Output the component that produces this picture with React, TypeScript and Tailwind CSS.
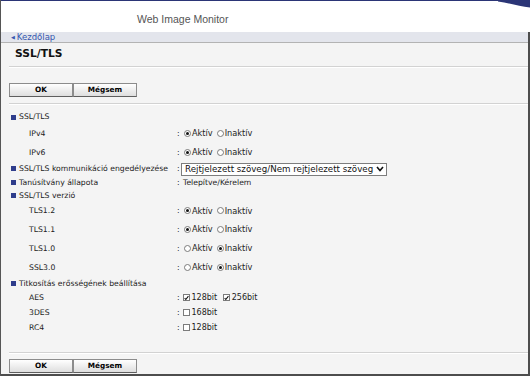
import React from "react";

const Radio = ({ on }: { on: boolean }) => (
	<span className="inline-flex items-center justify-center w-[7px] h-[7px] rounded-full border border-[#7b7b7b] bg-white shrink-0">
		{on && <span className="w-[3px] h-[3px] rounded-full bg-[#111]" />}
	</span>
);

const Check = ({ on }: { on: boolean }) => (
	<span className="inline-flex items-center justify-center w-[7px] h-[7px] border border-[#7b7b7b] bg-white shrink-0">
		{on && (
			<svg width="6" height="6" viewBox="0 0 6 6">
				<polyline points="0.8,3.2 2.2,4.8 5.3,0.8" fill="none" stroke="#111" strokeWidth="1.3" />
			</svg>
		)}
	</span>
);

const Buttons = () => (
	<div className="flex pl-[8px] h-[14px]">
		{["OK", "Mégsem"].map((b) => (
			<div
				key={b}
				className="w-[64px] h-[14px] flex items-center justify-center border border-[#8c8c8c] border-b-[#5e5e5e] bg-gradient-to-b from-white to-[#dedede] text-[7.3px] font-bold text-black leading-none"
			>
				{b}
			</div>
		))}
	</div>
);

const Separator = () => (
	<div className="ml-[8px]">
		<div className="h-px bg-[#d2d2d2]" />
		<div className="h-px bg-white" />
	</div>
);

const Section = ({ label, h }: { label: string; h: string }) => (
	<div className={`flex items-center pl-[10px] ${h}`}>
		<span className="w-[5px] h-[5px] bg-[#2f3d8c] mr-[3px]" />
		<span>{label}</span>
	</div>
);

const Row = ({
	label,
	h,
	sub = true,
	children,
}: {
	label: string;
	h: string;
	sub?: boolean;
	children: React.ReactNode;
}) => (
	<div className={`flex items-center pl-[10px] ${h}`}>
		<div className="w-[166px] flex items-center shrink-0">
			{sub ? (
				<span className="pl-[18px]">{label}</span>
			) : (
				<>
					<span className="w-[5px] h-[5px] bg-[#2f3d8c] mr-[3px]" />
					<span>{label}</span>
				</>
			)}
		</div>
		<span className="w-[6px]">:</span>
		<div className="flex items-center">{children}</div>
	</div>
);

const RadioPair = ({ active }: { active: boolean }) => (
	<div className="flex items-center text-[8.2px] pl-[1px]">
		<Radio on={active} />
		<span className="ml-[1px] mr-[4px]">Aktív</span>
		<Radio on={!active} />
		<span className="ml-[1px]">Inaktív</span>
	</div>
);

const App = () => {
	return (
		<div className="w-[530px] h-[376px] overflow-hidden bg-[#f4f4f4] border-l border-[#555] font-['DejaVu_Sans',sans-serif] text-[7.7px] text-[#1c1c1c] leading-none">
			{/* header */}
			<div className="relative h-[32px] bg-white border-t border-[#2b3576] flex items-center pl-[136px]">
				<span className="font-['Liberation_Sans',Arial,sans-serif] text-[10.5px] text-[#555] mt-[5px]">
					Web Image Monitor
				</span>
				<svg className="absolute top-0 right-0" width="32" height="7" viewBox="0 0 32 7">
					<path d="M0 0 H32 V6.5 C22 5.5 12 2 0 0.5 Z" fill="#2b3576" />
				</svg>
			</div>

			<div className="h-[344px] border-r-2 border-b-2 border-[#4d4d4d]">
				{/* nav */}
				<div className="h-[11px] bg-[#e3e5ec] border-b border-[#b3b3b3] flex items-center pl-[10px] text-[8.5px] text-[#3557b0]">
					<span className="text-[5px] mr-[2px]">◀</span>
					<span>Kezdőlap</span>
				</div>

				<div className="h-[23px] flex items-center pl-[14px] text-[10.7px] font-bold text-[#111]">SSL/TLS</div>
				<Separator />
				<div className="mt-[15px]">
					<Buttons />
				</div>
				<div className="mt-[6px]">
					<Separator />
				</div>

				<div className="mt-[5px]">
					<Section label="SSL/TLS" h="h-[14px]" />
					<Row label="IPv4" h="h-[19px]">
						<RadioPair active />
					</Row>
					<Row label="IPv6" h="h-[19px]">
						<RadioPair active />
					</Row>
					<Row label="SSL/TLS kommunikáció engedélyezése" h="h-[14px]" sub={false}>
						<div className="w-[206px] h-[13px] -ml-[2px] bg-white border border-[#7d7d7d] flex items-center justify-between pl-[3px] pr-[2px] text-[8.7px] text-[#111]">
							<span>Rejtjelezett szöveg/Nem rejtjelezett szöveg</span>
							<svg width="8" height="6" viewBox="0 0 8 6">
								<polyline points="1,1 4,4.5 7,1" fill="none" stroke="#111" strokeWidth="1.6" />
							</svg>
						</div>
					</Row>
					<Row label="Tanúsítvány állapota" h="h-[13px]" sub={false}>
						<span>Telepítve/Kérelem</span>
					</Row>
					<Section label="SSL/TLS verzió" h="h-[13px]" />
					<Row label="TLS1.2" h="h-[18px]">
						<RadioPair active />
					</Row>
					<Row label="TLS1.1" h="h-[19px]">
						<RadioPair active />
					</Row>
					<Row label="TLS1.0" h="h-[19px]">
						<RadioPair active={false} />
					</Row>
					<Row label="SSL3.0" h="h-[19px]">
						<RadioPair active={false} />
					</Row>
					<Section label="Titkosítás erősségének beállítása" h="h-[13px]" />
					<Row label="AES" h="h-[15px]">
						<div className="flex items-center text-[8px]">
							<Check on />
							<span className="ml-[1.5px] mr-[6px]">128bit</span>
							<Check on />
							<span className="ml-[1.5px]">256bit</span>
						</div>
					</Row>
					<Row label="3DES" h="h-[15px]">
						<div className="flex items-center text-[8px]">
							<Check on={false} />
							<span className="ml-[1.5px]">168bit</span>
						</div>
					</Row>
					<Row label="RC4" h="h-[15px]">
						<div className="flex items-center text-[8px]">
							<Check on={false} />
							<span className="ml-[1.5px]">128bit</span>
						</div>
					</Row>
				</div>

				<div className="mt-[17px]">
					<Separator />
				</div>
				<div className="mt-[5px]">
					<Buttons />
				</div>
			</div>
		</div>
	);
};

export default App;
